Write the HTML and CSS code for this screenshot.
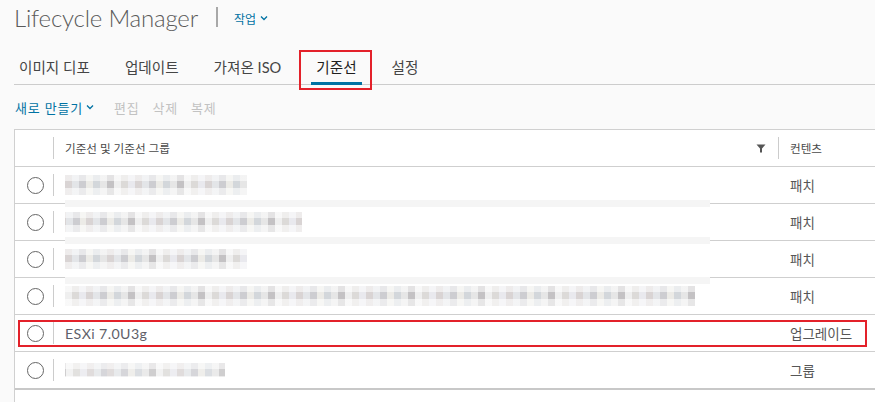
FILE: index.html
```html
<!DOCTYPE html>
<html lang="ko">
<head>
	<meta charset="UTF-8">
	<title>Lifecycle Manager</title>
	<link rel="stylesheet" href="styles.css">
</head>
<body>
	<header class="title-bar">
		<h1>Lifecycle Manager</h1>
		<span class="divider"></span>
		<a class="menu">작업 <svg width="8" height="6" viewBox="0 0 8 6"><path d="M1 1.5 L4 4.5 L7 1.5" fill="none" stroke="#0072a3" stroke-width="1.3"/></svg></a>
	</header>

	<nav class="tabs">
		<span class="tab">이미지 디포</span>
		<span class="tab">업데이트</span>
		<span class="tab">가져온 ISO</span>
		<span class="tab active mark">기준선</span>
		<span class="tab">설정</span>
	</nav>

	<div class="actions">
		<a class="act primary">새로 만들기 <svg width="8" height="6" viewBox="0 0 8 6"><path d="M1 1.5 L4 4.5 L7 1.5" fill="none" stroke="#0072a3" stroke-width="1.3"/></svg></a>
		<a class="act">편집</a>
		<a class="act">삭제</a>
		<a class="act">복제</a>
	</div>

	<div class="grid">
		<div class="row head">
			<div class="cell sel"></div>
			<div class="cell name">기준선 및 기준선 그룹
				<svg class="filter" width="10" height="9" viewBox="0 0 10 9"><path d="M0.5 0.5 H9.5 L6 4.5 V8.5 H4 V4.5 Z" fill="#555"/></svg>
			</div>
			<div class="cell kind">컨텐츠</div>
		</div>
		<div class="row">
			<div class="cell sel"><span class="radio"></span></div>
			<div class="cell name"><span class="mosaic" style="width:182px"></span><span class="smear"></span></div>
			<div class="cell kind">패치</div>
		</div>
		<div class="row">
			<div class="cell sel"><span class="radio"></span></div>
			<div class="cell name"><span class="mosaic m2" style="width:237px"></span><span class="smear"></span></div>
			<div class="cell kind">패치</div>
		</div>
		<div class="row">
			<div class="cell sel"><span class="radio"></span></div>
			<div class="cell name"><span class="mosaic m3" style="width:182px"></span><span class="smear low"></span></div>
			<div class="cell kind">패치</div>
		</div>
		<div class="row">
			<div class="cell sel"><span class="radio"></span></div>
			<div class="cell name"><span class="mosaic m2" style="width:630px"></span></div>
			<div class="cell kind">패치</div>
		</div>
		<div class="row mark-row">
			<div class="cell sel"><span class="radio"></span></div>
			<div class="cell name">ESXi 7.0U3g</div>
			<div class="cell kind">업그레이드</div>
		</div>
		<div class="row last">
			<div class="cell sel"><span class="radio"></span></div>
			<div class="cell name"><span class="mosaic m3 light" style="width:160px"></span></div>
			<div class="cell kind">그룹</div>
		</div>
		<div class="foot"></div>
	</div>
</body>
</html>
```

FILE: styles.css
```css
body {
	margin: 0;
	background-color: #fafafa;
	font-family: Lato, "Noto Sans CJK KR", sans-serif;
	color: #565656;
	overflow: hidden;}

.title-bar {
	display: flex;
	align-items: center;
	height: 34px;
	padding: 0 0 0 14px;}
.title-bar h1 {
	margin: 0;
	font-size: 24px;
	font-weight: 300;
	color: #5a5a5a;
	letter-spacing: -0.2px;}
.divider {
	width: 2px;
	height: 20px;
	background-color: #a8a8a8;
	margin: 0 16px 0 18px;}
.menu {
	font-size: 12px;
	color: #0072a3;
	display: flex;
	align-items: center;
	gap: 4px;
	padding-top: 2px;}

.tabs {
	display: flex;
	height: 35px;
	margin: 15px 0 0 14px;
	border-bottom: 1px solid #ccc;}
.tab {
	position: relative;
	padding: 0 5px;
	margin-right: 25px;
	margin-bottom: -1px;
	font-size: 14.6px;
	line-height: 38px;
	color: #454545;}
.tab.active {
	color: #1e1e1e;
	box-shadow: inset 0 -3px 0 #0072a3;}
.mark::after {
	content: "";
	position: absolute;
	top: 1px;
	bottom: -5px;
	left: -12px;
	right: -10px;
	border: 2px solid #e3212a;}

.actions {
	display: flex;
	gap: 13px;
	margin: 10px 0 0 15px;
	height: 24px;
	align-items: center;}
.act {
	font-size: 13px;
	color: #c2c2c2;
	letter-spacing: 0.8px;}
.act.primary {
	color: #0072a3;
	display: flex;
	align-items: center;
	gap: 3px;
	margin-right: 7px;}

.grid {
	margin: 10px 0 0 14px;
	background-color: #fff;
	border-top: 1px solid #d0d0d0;
	border-left: 1px solid #d0d0d0;}
.row {
	position: relative;
	display: flex;
	height: 36px;
	border-bottom: 1px solid #cfcfcf;}
.row.last {
	border-bottom: 2px solid #c8c8c8;}
.cell {
	display: flex;
	align-items: center;
	font-size: 13.5px;}
.sel {
	width: 38px;
	justify-content: center;}
.name {
	position: relative;
	flex: 1;
	padding-left: 12px;}
.name::before {
	content: "";
	position: absolute;
	left: 0;
	top: 7px;
	bottom: 7px;
	width: 1px;
	background-color: #ccc;}
.kind {
	width: 85px;
	padding-left: 12px;}
.head .cell {
	font-size: 11.6px;
	color: #4a4a4a;}
.head .kind {
	position: relative;}
.head .kind::before {
	content: "";
	position: absolute;
	left: 0;
	top: 7px;
	bottom: 7px;
	width: 1px;
	background-color: #ccc;}
.filter {
	margin-left: auto;
	margin-right: 12px;}
.mark-row .name {
	font-size: 14.2px;
	color: #5f5f6a;
	letter-spacing: 0.4px;}

.radio {
	width: 15px;
	height: 15px;
	border: 1px solid #666;
	border-radius: 50%;
	margin-left: 2px;}

.mosaic {
	height: 20px;
	background:
		linear-gradient(to bottom, rgba(255,255,255,0.55) 0 6px, rgba(255,255,255,0) 6px 13px, rgba(255,255,255,0.6) 13px),
		repeating-linear-gradient(90deg, #d9d4d4 0 7px, #e3e5e8 7px 14px, #cdcdd1 14px 21px, #ecebe7 21px 28px, #d3d7db 28px 35px, #e6e6e6 35px 42px, #c4c2c4 42px 49px, #efefef 49px 56px, #dcdad8 56px 63px, #e9e9ee 63px 70px);}
.mosaic.m2 {
	background-position: 0 0, 21px 0;}
.mosaic.m3 {
	background-position: 0 0, 42px 0;}
.mosaic.light {
	height: 14px;
	opacity: 0.8;}
.smear {
	position: absolute;
	left: 12px;
	width: 645px;
	bottom: -4px;
	height: 7px;
	background-color: #f5f5f5;}
.smear.low {
	bottom: -7px;}

.mark-row::after {
	content: "";
	position: absolute;
	left: 3px;
	width: 845px;
	top: 5px;
	bottom: 4px;
	border: 2px solid #e3212a;}

.foot {
	height: 14px;}
```
